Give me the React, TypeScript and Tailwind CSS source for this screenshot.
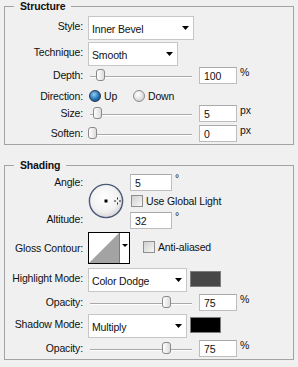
import type { ReactNode } from 'react'

const text = "font-['Liberation_Sans',Arial,sans-serif] text-[10.5px] leading-[12px] tracking-[-0.15px] text-[#111]"

function Group({ title, className, children }: { title: string; className?: string; children: ReactNode }) {
  return (
    <div className={`relative mx-[4px] border border-[#a3a3a3] ${className ?? ''}`}>
      <span className="absolute -top-[7px] left-[9px] bg-[#f0f0f0] px-[6px] font-bold leading-[12px]">{title}</span>
      {children}
    </div>
  )
}

function Label({ children, pt }: { children: ReactNode; pt: string }) {
  return <div className={`w-[78px] shrink-0 text-right ${pt}`}>{children}</div>
}

function Arrow() {
  return (
    <svg width="7" height="4" viewBox="0 0 7 4" className="shrink-0">
      <polygon points="0,0 7,0 3.5,4" fill="#000" />
    </svg>
  )
}

function Select({ value, width }: { value: string; width: string }) {
  return (
    <div className={`ml-[5px] flex h-[24px] ${width} items-center justify-between border border-[#c6c6c6] bg-white pl-[3px] pr-[4px]`}>
      <span className="pt-[1px]">{value}</span>
      <Arrow />
    </div>
  )
}

function NumberBox({ value, width = 'w-[38px]' }: { value: string; width?: string }) {
  return (
    <div className={`flex h-[17px] ${width} items-center border border-[#bdbdbd] border-t-[#a9a9a9] bg-white pl-[4px] pt-[1px]`}>
      {value}
    </div>
  )
}

function Slider({ thumb }: { thumb: number }) {
  return (
    <div className="relative ml-[5px] h-[17px] w-[104px] shrink-0">
      <div className="absolute top-[9px] left-[2px] right-0 h-[2px] border-t border-[#a9a9a9] bg-white" />
      <div
        className="absolute top-[2px] h-[12px] w-[9px] rounded-[3px] border border-[#8a8a8a] bg-[linear-gradient(to_right,#ffffff,#dcdcdc)]"
        style={{ left: thumb }}
      />
    </div>
  )
}

function SliderRow({ label, thumb, value, unit, className }: { label: string; thumb: number; value: string; unit: string; className?: string }) {
  return (
    <div className={`flex items-start ${className ?? ''}`}>
      <Label pt="pt-[2px]">{label}</Label>
      <Slider thumb={thumb} />
      <div className="ml-[7px]">
        <NumberBox value={value} />
      </div>
      <span className="ml-[3px] -mt-[1px]">{unit}</span>
    </div>
  )
}

function Checkbox() {
  return (
    <div className="h-[12px] w-[12px] shrink-0 border border-[#8e8f8f] bg-[linear-gradient(135deg,#cfcfcf,#f7f7f7)]" />
  )
}

function Dial() {
  return (
    <svg width="36" height="36" viewBox="0 0 36 36" className="ml-[5px] mt-[9px] shrink-0">
      <defs>
        <radialGradient id="dialFill" cx="45%" cy="40%" r="60%">
          <stop offset="0%" stopColor="#ffffff" />
          <stop offset="70%" stopColor="#f1f1f1" />
          <stop offset="100%" stopColor="#d6d6d6" />
        </radialGradient>
      </defs>
      <circle cx="18" cy="18" r="16.6" fill="url(#dialFill)" stroke="#4c5878" strokeWidth="1.4" />
      <rect x="16.5" y="16.5" width="3" height="3" fill="#000" />
      <g stroke="#222" strokeWidth="1">
        <line x1="29.5" y1="14.5" x2="29.5" y2="16.5" />
        <line x1="29.5" y1="19.5" x2="29.5" y2="21.5" />
        <line x1="26" y1="18" x2="28" y2="18" />
        <line x1="31" y1="18" x2="33" y2="18" />
      </g>
    </svg>
  )
}

function Contour() {
  return (
    <svg width="42" height="32" viewBox="0 0 42 32" className="ml-[5px] shrink-0">
      <rect x="0.5" y="0.5" width="41" height="31" fill="#fff" stroke="#000" />
      <polygon points="1,31 31,1 31,31" fill="#a3a3a3" />
      <line x1="31.5" y1="1" x2="31.5" y2="31" stroke="#7a7a7a" />
      <polygon points="34,12 40,12 37,15" fill="#000" />
    </svg>
  )
}

function Radio({ on }: { on: boolean }) {
  return on ? (
    <div className="h-[12px] w-[12px] shrink-0 rounded-full border border-[#23344f] bg-[radial-gradient(circle_at_40%_35%,#8fcdf5,#2670b4_55%,#0d3c6c)]" />
  ) : (
    <div className="h-[12px] w-[12px] shrink-0 rounded-full border border-[#8c8c8c] bg-[radial-gradient(circle_at_40%_35%,#ffffff,#dedede_60%,#c4c4c4)]" />
  )
}

function Swatch({ color }: { color: string }) {
  return <div className={`ml-[3px] mt-[3px] h-[16px] w-[31px] border border-[#7d7d7d] ${color}`} />
}

export default function App() {
  return (
    <div className={`h-[367px] w-[298px] overflow-hidden bg-[#f0f0f0] ${text}`}>
      <div className="h-[6px]" />
      <Group title="Structure" className="pt-[9px] pb-[2px]">
        <div className="flex items-start">
          <Label pt="pt-[4px]">Style:</Label>
          <Select value="Inner Bevel" width="w-[106px]" />
        </div>
        <div className="mt-[2px] flex items-start">
          <Label pt="pt-[4px]">Technique:</Label>
          <Select value="Smooth" width="w-[90px]" />
        </div>
        <SliderRow label="Depth:" thumb={8} value="100" unit="%" className="mt-[1px]" />
        <div className="mt-[6px] flex h-[12px] items-center">
          <Label pt="">Direction:</Label>
          <div className="ml-[6px] flex w-[44px] items-center">
            <Radio on />
            <span className="ml-[3px]">Up</span>
          </div>
          <div className="flex items-center">
            <Radio on={false} />
            <span className="ml-[3px]">Down</span>
          </div>
        </div>
        <SliderRow label="Size:" thumb={5} value="5" unit="px" className="mt-[3px]" />
        <SliderRow label="Soften:" thumb={0} value="0" unit="px" className="mt-[3px]" />
      </Group>

      <Group title="Shading" className="mt-[20px] pt-[8px] pb-[2px]">
        <div className="flex h-[55px] items-start">
          <div className="flex h-full w-[78px] shrink-0 flex-col justify-between text-right">
            <div className="pt-[2px]">Angle:</div>
            <div className="pb-[4px]">Altitude:</div>
          </div>
          <Dial />
          <div className="ml-[6px] flex flex-col">
            <div className="flex items-start">
              <NumberBox value="5" width="w-[42px]" />
              <span className="ml-[3px] -mt-[2px]">°</span>
            </div>
            <div className="mt-[4px] flex items-center">
              <div className="ml-[1px]">
                <Checkbox />
              </div>
              <span className="ml-[3px]">Use Global Light</span>
            </div>
            <div className="mt-[5px] flex items-start">
              <NumberBox value="32" width="w-[42px]" />
              <span className="ml-[3px] -mt-[2px]">°</span>
            </div>
          </div>
        </div>

        <div className="mt-[3px] flex items-start">
          <Label pt="pt-[10px]">Gloss Contour:</Label>
          <Contour />
          <div className="ml-[13px] mt-[9px] flex items-center">
            <Checkbox />
            <span className="ml-[3px]">Anti-aliased</span>
          </div>
        </div>

        <div className="mt-[4px] flex items-start">
          <Label pt="pt-[4px]">Highlight Mode:</Label>
          <Select value="Color Dodge" width="w-[99px]" />
          <Swatch color="bg-[#474747]" />
        </div>
        <SliderRow label="Opacity:" thumb={74} value="75" unit="%" className="mt-[2px]" />

        <div className="mt-[3px] flex items-start">
          <Label pt="pt-[4px]">Shadow Mode:</Label>
          <Select value="Multiply" width="w-[99px]" />
          <Swatch color="bg-[#000000]" />
        </div>
        <SliderRow label="Opacity:" thumb={74} value="75" unit="%" className="mt-[2px]" />
      </Group>
    </div>
  )
}
